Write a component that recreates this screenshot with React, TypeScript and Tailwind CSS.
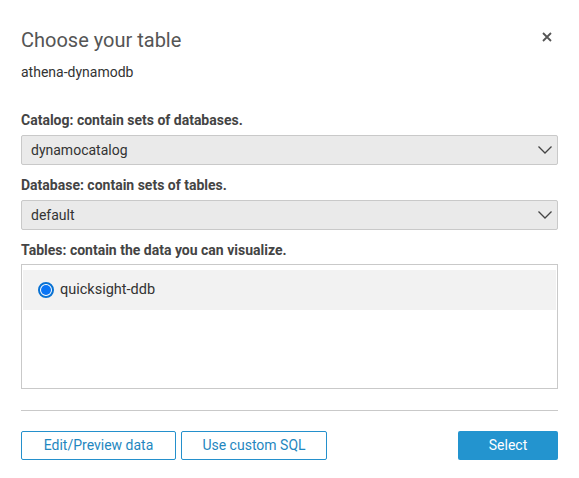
import React from "react";

function Chevron() {
  return (
    <svg width="16" height="10" viewBox="0 0 16 10" fill="none">
      <path d="M1.5 1.5 L8 8 L14.5 1.5" stroke="#444" strokeWidth="1.3" />
    </svg>
  );
}

function SelectBox({ value }: { value: string }) {
  return (
    <div className="flex items-center justify-between h-[30px] border border-[#c9c9c9] bg-[#eaeaea] rounded-[2px] pl-[9px] pr-[4px] text-[14px] text-[#333]">
      <span>{value}</span>
      <Chevron />
    </div>
  );
}

export default function App() {
  return (
    <div
      className="w-[579px] h-[478px] bg-white px-[21px] pt-[26px] text-[#333]"
      style={{ fontFamily: "Roboto, 'Open Sans', sans-serif" }}
    >
      <div className="flex items-start justify-between">
        <h1 className="text-[20px] leading-[28px] text-[#555] font-normal">Choose your table</h1>
        <svg width="10" height="10" viewBox="0 0 10 10" className="mt-[6px] mr-[6px]">
          <path d="M1 1 L9 9 M9 1 L1 9" stroke="#555" strokeWidth="1.8" />
        </svg>
      </div>
      <div className="mt-[9px] text-[14px] leading-[18px] text-[#333]">athena-dynamodb</div>

      <div className="mt-[30px] text-[14px] leading-[18px] font-bold text-[#444]">Catalog: contain sets of databases.</div>
      <div className="mt-[6px]">
        <SelectBox value="dynamocatalog" />
      </div>

      <div className="mt-[11px] text-[14px] leading-[18px] font-bold text-[#444]">Database: contain sets of tables.</div>
      <div className="mt-[6px]">
        <SelectBox value="default" />
      </div>

      <div className="mt-[11px] text-[14px] leading-[18px] font-bold text-[#444]">Tables: contain the data you can visualize.</div>
      <div className="mt-[5px] h-[125px] border border-[#c9c9c9] pt-[5px] px-[1px]">
        <div className="flex items-center h-[40px] bg-[#f2f2f2] pl-[15px] gap-[6px]">
          <span className="w-[16px] h-[16px] rounded-full border-[2px] border-[#0972d3] bg-white flex items-center justify-center">
            <span className="w-[10px] h-[10px] rounded-full bg-[#0a75f5]" />
          </span>
          <span className="text-[14.5px] text-[#333]">quicksight-ddb</span>
        </div>
      </div>

      <div className="mt-[21px] border-t border-[#c9c9c9]" />

      <div className="mt-[20px] flex items-center">
        <button className="h-[29px] w-[155px] border border-[#2490cc] rounded-[2px] text-[14px] text-[#1f87c0] bg-white">
          Edit/Preview data
        </button>
        <button className="ml-[5px] h-[29px] w-[146px] border border-[#2490cc] rounded-[2px] text-[14px] text-[#1f87c0] bg-white">
          Use custom SQL
        </button>
        <button className="ml-auto h-[29px] w-[100px] rounded-[2px] text-[14px] text-white bg-[#2394cf]">
          Select
        </button>
      </div>
    </div>
  );
}
